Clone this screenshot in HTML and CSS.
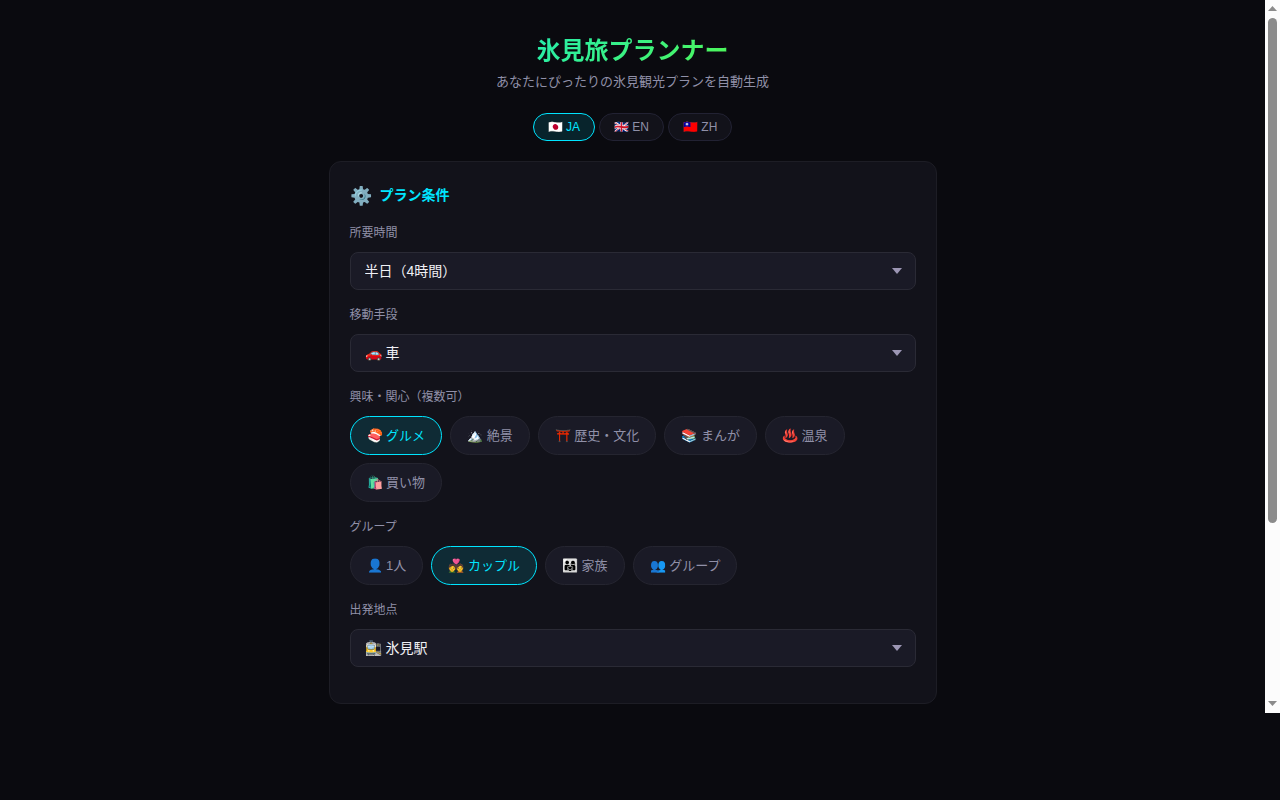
FILE: index.html
```
<!DOCTYPE html>
<html lang="ja">
<head>
    <meta charset="UTF-8">
    <meta name="viewport" content="width=device-width, initial-scale=1.0">
    <title>氷見旅プランナー</title>
    <link rel="stylesheet" href="styles.css">
</head>
<body>
    <div class="view">
        <main class="screen" id="screen">
            <div class="container">
                <header class="header">
                    <h1>氷見旅プランナー</h1>
                    <p class="subtitle">あなたにぴったりの氷見観光プランを自動生成</p>
                </header>

                <!-- Language switch -->
                <div class="lang-bar">
                    <button type="button" class="lang-btn active">🇯🇵 JA</button>
                    <button type="button" class="lang-btn">🇬🇧 EN</button>
                    <button type="button" class="lang-btn">🇹🇼 ZH</button>
                </div>

                <!-- Plan conditions -->
                <section class="card">
                    <h2 class="card-title"><span class="icon">⚙️</span>プラン条件</h2>

                    <div class="form-group">
                        <label for="duration">所要時間</label>
                        <select id="duration">
                            <option>半日（4時間）</option>
                        </select>
                    </div>

                    <div class="form-group">
                        <label for="transport">移動手段</label>
                        <select id="transport">
                            <option>🚗 車</option>
                        </select>
                    </div>

                    <div class="form-group">
                        <span class="group-label" id="interestLabel">興味・関心（複数可）</span>
                        <div class="chips" id="interests" role="group" aria-labelledby="interestLabel">
                            <button type="button" class="chip active">🍣 グルメ</button>
                            <button type="button" class="chip">🏔️ 絶景</button>
                            <button type="button" class="chip">⛩️ 歴史・文化</button>
                            <button type="button" class="chip">📚 まんが</button>
                            <button type="button" class="chip">♨️ 温泉</button>
                            <button type="button" class="chip">🛍️ 買い物</button>
                        </div>
                    </div>

                    <div class="form-group">
                        <span class="group-label" id="groupLabel">グループ</span>
                        <div class="chips" id="groupType" role="group" aria-labelledby="groupLabel">
                            <button type="button" class="chip">👤 1人</button>
                            <button type="button" class="chip active">💑 カップル</button>
                            <button type="button" class="chip">👨‍👩‍👧 家族</button>
                            <button type="button" class="chip">👥 グループ</button>
                        </div>
                    </div>

                    <div class="form-group">
                        <label for="start">出発地点</label>
                        <select id="start">
                            <option>🚉 氷見駅</option>
                        </select>
                    </div>
                </section>
            </div>
        </main>

        <!-- Scrollbar -->
        <div class="scrollbar" aria-hidden="true">
            <svg width="15" height="18" viewBox="0 0 15 18"><path d="M3 11h9L7.500 6z" fill="#8b8b8b"/></svg>
            <div class="track" id="track"><div class="thumb" id="thumb"></div></div>
            <svg width="15" height="18" viewBox="0 0 15 18"><path d="M3 6h9L7.500 11z" fill="#8b8b8b"/></svg>
        </div>
    </div>
    <footer class="bottom-space"></footer>

    <script>
        const screenEl = document.getElementById('screen');
        const track = document.getElementById('track');
        const thumb = document.getElementById('thumb');

        // Keep the thumb in step with the scroll position
        function updateThumb() {
            const ratio = track.clientHeight / screenEl.scrollHeight;
            thumb.style.height = Math.round(screenEl.clientHeight * ratio) + 'px';
            thumb.style.marginTop = Math.round(screenEl.scrollTop * ratio) + 'px';
        }
        screenEl.addEventListener('scroll', updateThumb);
        window.addEventListener('resize', updateThumb);
        updateThumb();

        // Interests can be combined
        document.querySelectorAll('#interests .chip').forEach(chip => {
            chip.onclick = () => chip.classList.toggle('active');
        });

        // Only one language and one group type at a time
        function singleSelect(selector) {
            const items = document.querySelectorAll(selector);
            items.forEach(item => {
                item.onclick = () => {
                    items.forEach(i => i.classList.remove('active'));
                    item.classList.add('active');
                };
            });
        }
        singleSelect('#groupType .chip');
        singleSelect('.lang-btn');
    </script>
</body>
</html>
```
FILE: styles.css
```
* {
    box-sizing: border-box;
    margin: 0;
    padding: 0;
}

body {
    font-family: "Liberation Sans", "Noto Sans CJK JP", sans-serif;
    background: #0a0a0f;
    color: #f0f0f5;
    height: 100vh;
    display: flex;
    flex-direction: column;
    overflow: hidden;
}

.view {
    flex: 1;
    min-height: 0;
    display: flex;
}

.screen {
    flex: 1;
    overflow-y: auto;
    scrollbar-width: none;
}

.scrollbar {
    flex: none;
    width: 15px;
    display: flex;
    flex-direction: column;
    background: #fcfcfc;
}

.scrollbar svg {
    flex: none;
    display: block;
}

.track {
    flex: 1;
    padding: 0 3px;
    overflow: hidden;
}

.thumb {
    background: #8b8b8b;
    border-radius: 5px;
}

.bottom-space {
    flex: none;
    height: 87px;
}

.container {
    max-width: 640px;
    margin: 0 auto;
    padding: 32px 16px 252px;
}

.header {
    text-align: center;
    margin-bottom: 20px;
}

h1 {
    font-size: 24px;
    line-height: 38px;
    background: linear-gradient(135deg, #00e5ff, #76ff03);
    -webkit-background-clip: text;
    background-clip: text;
    color: transparent;
}

.subtitle {
    font-size: 13px;
    line-height: 23px;
    color: #9090a8;
}

.lang-bar {
    display: flex;
    justify-content: center;
    gap: 4px;
    margin-bottom: 20px;
}

.lang-btn {
    height: 28px;
    padding: 0 14px;
    font-family: inherit;
    font-size: 12px;
    color: #9090a8;
    background: #12121a;
    border: 1px solid #222233;
    border-radius: 20px;
    cursor: pointer;
}

.card {
    padding: 20px;
    background: #12121a;
    border: 1px solid #1d1d25;
    border-radius: 12px;
}

.card-title {
    display: flex;
    align-items: center;
    gap: 8px;
    margin-bottom: 18px;
    font-family: "Noto Sans CJK JP", sans-serif;
    font-size: 14px;
    line-height: 24px;
    color: #00e5ff;
}

.card-title .icon {
    font-size: 18px;
}

.form-group {
    margin-bottom: 16px;
}

.form-group label,
.group-label {
    display: block;
    font-size: 12px;
    line-height: 18px;
    margin-bottom: 10px;
    color: #9090a8;
}

select {
    display: block;
    width: 100%;
    height: 38px;
    padding: 0 14px;
    font-family: inherit;
    font-size: 14px;
    color: #f0f0f5;
    background: #1a1a26 url("data:image/svg+xml,%3Csvg xmlns='http://www.w3.org/2000/svg' width='10' height='6'%3E%3Cpath d='M0 0h10L5 6z' fill='%239c96b4'/%3E%3C/svg%3E") no-repeat right 13px center;
    border: 1px solid #2a2a35;
    border-radius: 8px;
    appearance: none;
}

.chips {
    display: flex;
    flex-wrap: wrap;
    gap: 8px;
}

.chip {
    height: 39px;
    padding: 0 16px 2px;
    font-family: inherit;
    font-size: 13px;
    color: #9090a8;
    background: #1a1a26;
    border: 1px solid #252530;
    border-radius: 20px;
    cursor: pointer;
}

.lang-btn.active,
.chip.active {
    color: #00e5ff;
    background: rgba(0, 229, 255, 0.12);
    border-color: #00e5ff;
}
```
